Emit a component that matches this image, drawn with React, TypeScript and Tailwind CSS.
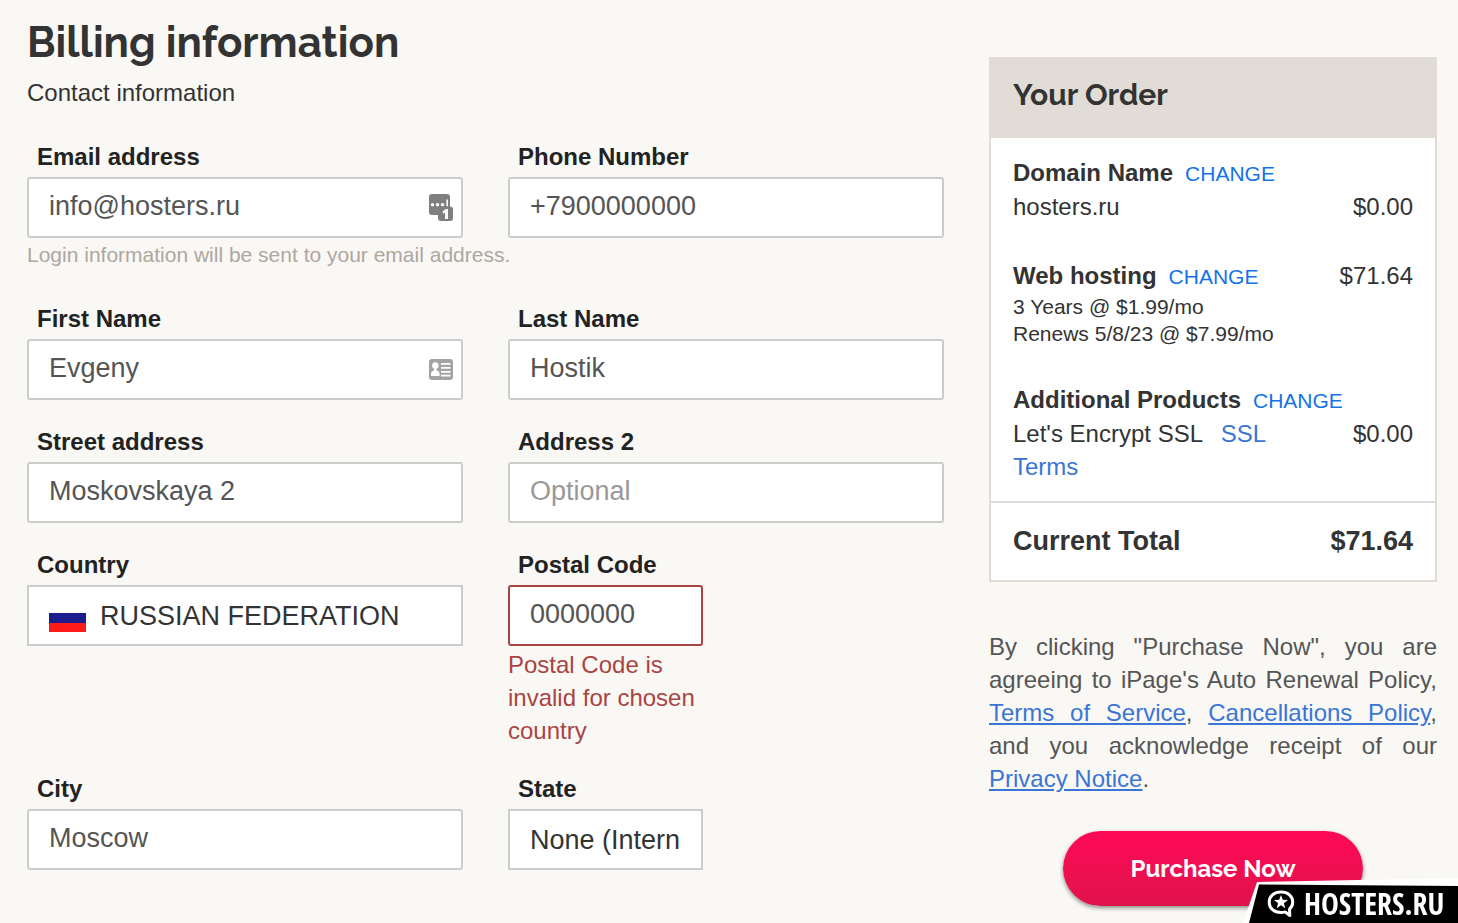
import { useState, type ReactNode } from "react";

const control =
  "h-[61px] w-full border-2 bg-white px-5 text-[27px] leading-8 outline-none";
const textBox = control + " rounded-[3px] pb-[2px] text-[#555555] placeholder:text-[#999999]";
const dropDown = control + " appearance-none text-[#333333]";
const link = "text-[#3a75d6]";

function Field({
  id,
  label,
  narrow,
  children,
}: {
  id: string;
  label: string;
  narrow?: boolean;
  children: ReactNode;
}) {
  return (
    <div className={narrow ? "w-[195px]" : "w-full"}>
      <label htmlFor={id} className="mb-1 block px-[10px] font-bold text-[#222222]">
        {label}
      </label>
      {children}
    </div>
  );
}

function TextField({
  id,
  label,
  value,
  type = "text",
  placeholder,
  icon,
  invalid,
}: {
  id: string;
  label: string;
  value: string;
  type?: string;
  placeholder?: string;
  icon?: ReactNode;
  invalid?: string;
}) {
  const [text, setText] = useState(value);
  return (
    <Field id={id} label={label} narrow={Boolean(invalid)}>
      <div className="relative">
        <input
          id={id}
          type={type}
          value={text}
          placeholder={placeholder}
          aria-invalid={Boolean(invalid)}
          onChange={(e) => setText(e.target.value)}
          className={textBox + (invalid ? " border-[#a94442]" : " border-[#cccccc]")}
        />
        {icon && <span className="absolute right-[10px] top-[17px]">{icon}</span>}
      </div>
      {invalid && <p className="mt-[2px] text-[#a94442]">{invalid}</p>}
    </Field>
  );
}

function PasswordIcon() {
  return (
    <svg width="24" height="28" viewBox="0 0 24 28" aria-hidden="true">
      <rect width="21" height="21" rx="3" fill="#7f7f7f" />
      <circle cx="3.5" cy="10.700" r="1.700" fill="#fff" />
      <circle cx="8.500" cy="10.700" r="1.700" fill="#fff" />
      <circle cx="13.500" cy="10.700" r="1.700" fill="#fff" />
      <path d="M18.200 5.500v7" stroke="#fff" strokeWidth="1.600" />
      <rect x="9" y="12.500" width="15" height="14.500" rx="3" fill="#7f7f7f" />
      <path d="M13.500 17.600l3.200-2.600h2.300v10h-3v-6.400l-1.600 1.200z" fill="#fff" />
    </svg>
  );
}

function ContactIcon() {
  return (
    <svg width="24" height="28" viewBox="0 0 24 28" aria-hidden="true">
      <rect y="3" width="24" height="21" rx="3" fill="#a3a3a3" />
      <circle cx="6.300" cy="9.500" r="3.200" fill="#fff" />
      <path d="M5 11.500h2.600v3c2 .5 3 1.600 3 3.600V20H2v-1.900c0-2 1-3.100 3-3.600z" fill="#fff" />
      <path d="M12 7.800h9.500M12 11.800h9.500M12 15.800h9.500M12 19.600h9.500" stroke="#fff" strokeWidth="1.800" />
    </svg>
  );
}

function Change() {
  return (
    <a href="#change" className="ml-3 text-[21px] text-[#1473e6]">
      CHANGE
    </a>
  );
}

function Watermark() {
  return (
    <div className="fixed bottom-0 right-0 h-[45px] w-[216px]">
      <svg width="216" height="45" viewBox="0 0 216 45" className="absolute inset-0" aria-hidden="true">
        <path d="M1 45L15 4L216 0V45z" fill="#fff" />
        <path d="M7 45L17 6.500L216 8V45z" fill="#000" />
        <path
          d="M39 14c-7 0-11.800 4-11.800 10.200S32 34.500 39 34.500c1.600 0 3-.2 4.200-.6l4.600 3.600-.3-6.400c2-1.800 3.200-4.100 3.200-6.900C50.700 18 46 14 39 14z"
          fill="none"
          stroke="#fff"
          strokeWidth="3"
          strokeLinejoin="round"
        />
        <path d="M39 17l1.800 4.800 5.200.2-4.100 3.200 1.400 5-4.300-2.900-4.300 2.900 1.400-5-4.100-3.200 5.200-.2z" fill="#fff" />
      </svg>
      <span className="absolute left-[62px] top-[10px] font-['Open_Sans_Condensed','Open_Sans',sans-serif] text-[30px] font-bold leading-8 text-white">
        HOSTERS.RU
      </span>
    </div>
  );
}

export default function App() {
  return (
    <div className="flex min-h-screen items-start gap-[45px] bg-[#f9f8f5] pl-[27px] pr-[21px] font-['Liberation_Sans',Arial,sans-serif] text-[24px] leading-[33px] text-[#333333]">
      <main className="min-w-0 flex-1 pt-[15px]">
        <h1 className="font-['Raleway','Lato',sans-serif] text-[42px] font-bold leading-[56px]">
          Billing information
        </h1>
        <p className="mt-[5px]">Contact information</p>
        <form className="mt-[31px] grid grid-cols-2 gap-x-[45px] gap-y-[25px]">
          <div>
            <TextField id="email" type="email" label="Email address" value="info@hosters.ru" icon={<PasswordIcon />} />
            <p className="mb-[6px] whitespace-nowrap text-[21px] text-[#aea79f]">
              Login information will be sent to your email address.
            </p>
          </div>
          <TextField id="phone" type="tel" label="Phone Number" value="+7900000000" />
          <TextField id="first" label="First Name" value="Evgeny" icon={<ContactIcon />} />
          <TextField id="last" label="Last Name" value="Hostik" />
          <TextField id="street" label="Street address" value="Moskovskaya 2" />
          <TextField id="address2" label="Address 2" value="" placeholder="Optional" />
          <Field id="country" label="Country">
            <div className="relative">
              <select id="country" className={dropDown + " border-[#cccccc] pl-[71px]"}>
                <option>RUSSIAN FEDERATION</option>
              </select>
              <svg width="37" height="28" viewBox="0 0 37 28" className="absolute left-[22px] top-[19px]" aria-hidden="true">
                <rect width="37" height="28" fill="#fff" />
                <rect y="9" width="37" height="10" fill="#1c1c8c" />
                <rect y="19" width="37" height="9" fill="#ff1a1a" />
              </svg>
            </div>
          </Field>
          <TextField
            id="postal"
            label="Postal Code"
            value="0000000"
            invalid="Postal Code is invalid for chosen country"
          />
          <TextField id="city" label="City" value="Moscow" />
          <Field id="state" label="State" narrow>
            <select id="state" className={dropDown + " border-[#cccccc]"}>
              <option>None (International)</option>
            </select>
          </Field>
        </form>
      </main>

      <aside className="w-[448px] shrink-0 pt-[57px]">
        <section className="border-2 border-[#e1dcd5] bg-white">
          <h2 className="bg-[#e1dcd5] px-[22px] pb-[27px] pt-[19px] font-['Raleway','Lato',sans-serif] text-[30px] font-bold">
            Your Order
          </h2>
          <div className="flex flex-col gap-9 px-[22px] pb-[18px] pt-[18px]">
            <div>
              <div>
                <b>Domain Name</b>
                <Change />
              </div>
              <div className="flex justify-between">
                <span>hosters.ru</span>
                <span>$0.00</span>
              </div>
            </div>
            <div>
              <div className="flex justify-between">
                <span>
                  <b>Web hosting</b>
                  <Change />
                </span>
                <span>$71.64</span>
              </div>
              <p className="text-[21px] leading-[27px]">
                3 Years @ $1.99/mo
                <br />
                Renews 5/8/23 @ $7.99/mo
              </p>
            </div>
            <div>
              <div>
                <b>Additional Products</b>
                <Change />
              </div>
              <div className="flex justify-between">
                <p className="w-[280px]">
                  Let's Encrypt SSL{" "}
                  <a href="#ssl" className={link + " ml-3"}>
                    SSL Terms
                  </a>
                </p>
                <span>$0.00</span>
              </div>
            </div>
          </div>
          <div className="flex justify-between border-t-2 border-[#dddddd] px-[22px] py-[22px] text-[27px] font-bold">
            <span>Current Total</span>
            <span>$71.64</span>
          </div>
        </section>
        <p className="mt-12 text-justify text-[#555555]">
          By clicking "Purchase Now", you are agreeing to iPage's Auto Renewal Policy,{" "}
          <a href="#tos" className={link + " underline"}>
            Terms of Service
          </a>
          ,{" "}
          <a href="#cancel" className={link + " underline"}>
            Cancellations Policy
          </a>
          , and you acknowledge receipt of our{" "}
          <a href="#privacy" className={link + " underline"}>
            Privacy Notice
          </a>
          .
        </p>
        <button
          type="button"
          className="mx-auto mt-9 block h-[75px] w-[300px] rounded-full bg-linear-to-b from-[#ff0856] to-[#df134c] font-['Raleway','Lato',sans-serif] font-bold text-white shadow-[0_2px_4px_rgba(0,0,0,0.45)]"
        >
          Purchase Now
        </button>
      </aside>
      <Watermark />
    </div>
  );
}
